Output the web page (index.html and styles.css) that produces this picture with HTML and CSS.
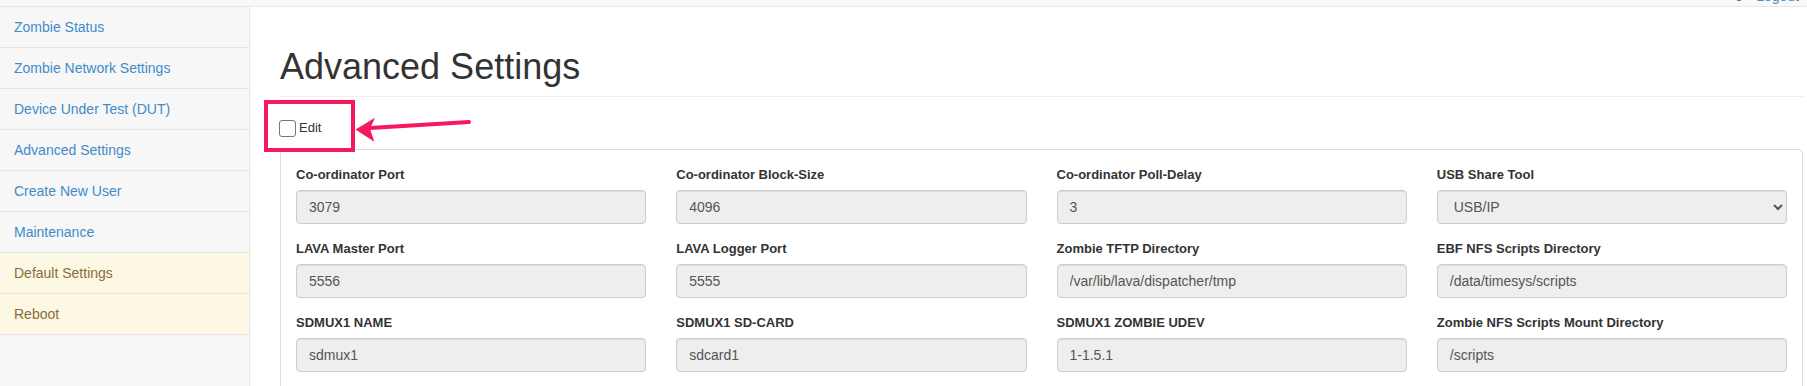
FILE: index.html
```html
<!DOCTYPE html>
<html lang="en">
<head>
    <meta charset="UTF-8">
    <meta name="viewport" content="width=device-width, initial-scale=1.0">
    <title>Advanced Settings</title>
    <link rel="stylesheet" href="styles.css">
</head>
<body>
    <div class="topbar">
        <a href="#" class="logout">
            <svg class="logout-icon" width="11" height="12" viewBox="0 0 11 12">
                <path d="M4 1H1v10h3" fill="none" stroke="currentColor" stroke-width="2"/>
                <path d="M4 6h5M7 3l3 3-3 3" fill="none" stroke="currentColor" stroke-width="2"/>
            </svg>
            Logout
        </a>
    </div>

    <div class="layout">
        <div class="sidebar">
            <ul class="nav-list">
                <li><a href="#">Zombie Status</a></li>
                <li><a href="#">Zombie Network Settings</a></li>
                <li><a href="#">Device Under Test (DUT)</a></li>
                <li><a href="#">Advanced Settings</a></li>
                <li><a href="#">Create New User</a></li>
                <li><a href="#">Maintenance</a></li>
                <li class="warning"><a href="#">Default Settings</a></li>
                <li class="warning"><a href="#">Reboot</a></li>
            </ul>
        </div>

        <div class="main">
            <div class="page-header">
                <h1>Advanced Settings</h1>
            </div>

            <div class="edit-row">
                <label class="edit-toggle">
                    <input type="checkbox" id="edit-toggle">
                    Edit
                </label>
                <!-- annotation drawn over the screenshot -->
                <div class="callout-box"></div>
                <svg class="callout-arrow" width="120" height="34" viewBox="0 0 120 34">
                    <line x1="18" y1="16" x2="117" y2="10" stroke="#f41a5b" stroke-width="4" stroke-linecap="round"/>
                    <path d="M3.5 17.5 L23 5.7 L18 16.5 L22.3 29.7 Z" fill="#f41a5b"/>
                </svg>
            </div>

            <div class="panel">
                <div class="panel-body">
                    <div class="form-group">
                        <label>Co-ordinator Port</label>
                        <input type="text" class="form-control" value="3079" readonly>
                    </div>
                    <div class="form-group">
                        <label>Co-ordinator Block-Size</label>
                        <input type="text" class="form-control" value="4096" readonly>
                    </div>
                    <div class="form-group">
                        <label>Co-ordinator Poll-Delay</label>
                        <input type="text" class="form-control" value="3" readonly>
                    </div>
                    <div class="form-group">
                        <label>USB Share Tool</label>
                        <select class="form-control">
                            <option>USB/IP</option>
                            <option>USB Redirector</option>
                        </select>
                    </div>

                    <div class="form-group">
                        <label>LAVA Master Port</label>
                        <input type="text" class="form-control" value="5556" readonly>
                    </div>
                    <div class="form-group">
                        <label>LAVA Logger Port</label>
                        <input type="text" class="form-control" value="5555" readonly>
                    </div>
                    <div class="form-group">
                        <label>Zombie TFTP Directory</label>
                        <input type="text" class="form-control" value="/var/lib/lava/dispatcher/tmp" readonly>
                    </div>
                    <div class="form-group">
                        <label>EBF NFS Scripts Directory</label>
                        <input type="text" class="form-control" value="/data/timesys/scripts" readonly>
                    </div>

                    <div class="form-group">
                        <label>SDMUX1 NAME</label>
                        <input type="text" class="form-control" value="sdmux1" readonly>
                    </div>
                    <div class="form-group">
                        <label>SDMUX1 SD-CARD</label>
                        <input type="text" class="form-control" value="sdcard1" readonly>
                    </div>
                    <div class="form-group">
                        <label>SDMUX1 ZOMBIE UDEV</label>
                        <input type="text" class="form-control" value="1-1.5.1" readonly>
                    </div>
                    <div class="form-group">
                        <label>Zombie NFS Scripts Mount Directory</label>
                        <input type="text" class="form-control" value="/scripts" readonly>
                    </div>
                </div>
            </div>
        </div>
    </div>
</body>
</html>
```

FILE: styles.css
```css
body {
    margin: 0;
    font-family: "Liberation Sans", Arial, sans-serif;
    font-size: 14px;
    line-height: 20px;
    color: #333;
    background: #fff;
}

a { color: #428bca; text-decoration: none; }

/* navbar, scrolled almost out of view */
.topbar {
    height: 6px;
    background: #f8f8f8;
    border-bottom: 1px solid #e7e7e7;
    overflow: hidden;
    display: flex;
    justify-content: flex-end;
}

.logout {
    margin-top: -14px;
    margin-right: 8px;
    display: flex;
    align-items: baseline;
    gap: 8px;
}

.logout-icon { margin-bottom: -2px; }

.layout {
    display: flex;
    min-height: calc(100vh - 7px);
}

.sidebar {
    width: 249px;
    flex-shrink: 0;
    background: #f7f7f7;
    border-right: 1px solid #e7e7e7;
}

.nav-list { list-style: none; margin: 0; padding: 0; }

.nav-list li { border-bottom: 1px solid #e5e5e5; }

.nav-list a {
    display: block;
    padding: 10px 15px 10px 14px;
}

.nav-list li.warning { background: #fcf8e3; }
.nav-list li.warning a { color: #8a6d3b; }

.main {
    flex: 1;
    padding: 0 4px 0 30px;
}

.page-header {
    margin-top: 40px;
    padding-bottom: 9px;
    border-bottom: 1px solid #eee;
}

.page-header h1 {
    margin: 0;
    font-size: 36px;
    font-weight: 500;
    line-height: 1.1;
}

.edit-row {
    position: relative;
    height: 17px;
    margin: 23px 0 12px;
    display: flex;
    align-items: center;
}

.edit-toggle {
    display: flex;
    align-items: center;
    font-size: 13px;
}

.edit-toggle input {
    appearance: none;
    width: 17px;
    height: 17px;
    margin: 0 3px 0 -1px;
    border: 1px solid #767676;
    border-radius: 3px;
    background: #fff;
}

.callout-box {
    position: absolute;
    left: -16px;
    top: -20px;
    width: 91px;
    height: 52px;
    box-sizing: border-box;
    border: 4px solid #f41a5b;
    z-index: 2;
}

.callout-arrow {
    position: absolute;
    left: 72px;
    top: -8px;
    z-index: 2;
}

.panel {
    border: 1px solid #ddd;
    border-radius: 4px;
    background: #fff;
}

.panel-body {
    padding: 15px;
    display: grid;
    grid-template-columns: repeat(4, 1fr);
    column-gap: 30px;
}

.form-group { margin-bottom: 15px; }

.form-group label {
    display: block;
    margin-bottom: 5px;
    font-size: 13px;
    font-weight: bold;
}

.form-control {
    display: block;
    width: 100%;
    height: 34px;
    box-sizing: border-box;
    padding: 6px 12px;
    font-family: inherit;
    font-size: 14px;
    color: #555;
    background-color: #eee;
    border: 1px solid #ccc;
    border-radius: 4px;
    box-shadow: inset 0 1px 1px rgba(0, 0, 0, 0.075);
    outline: none;
}
```
